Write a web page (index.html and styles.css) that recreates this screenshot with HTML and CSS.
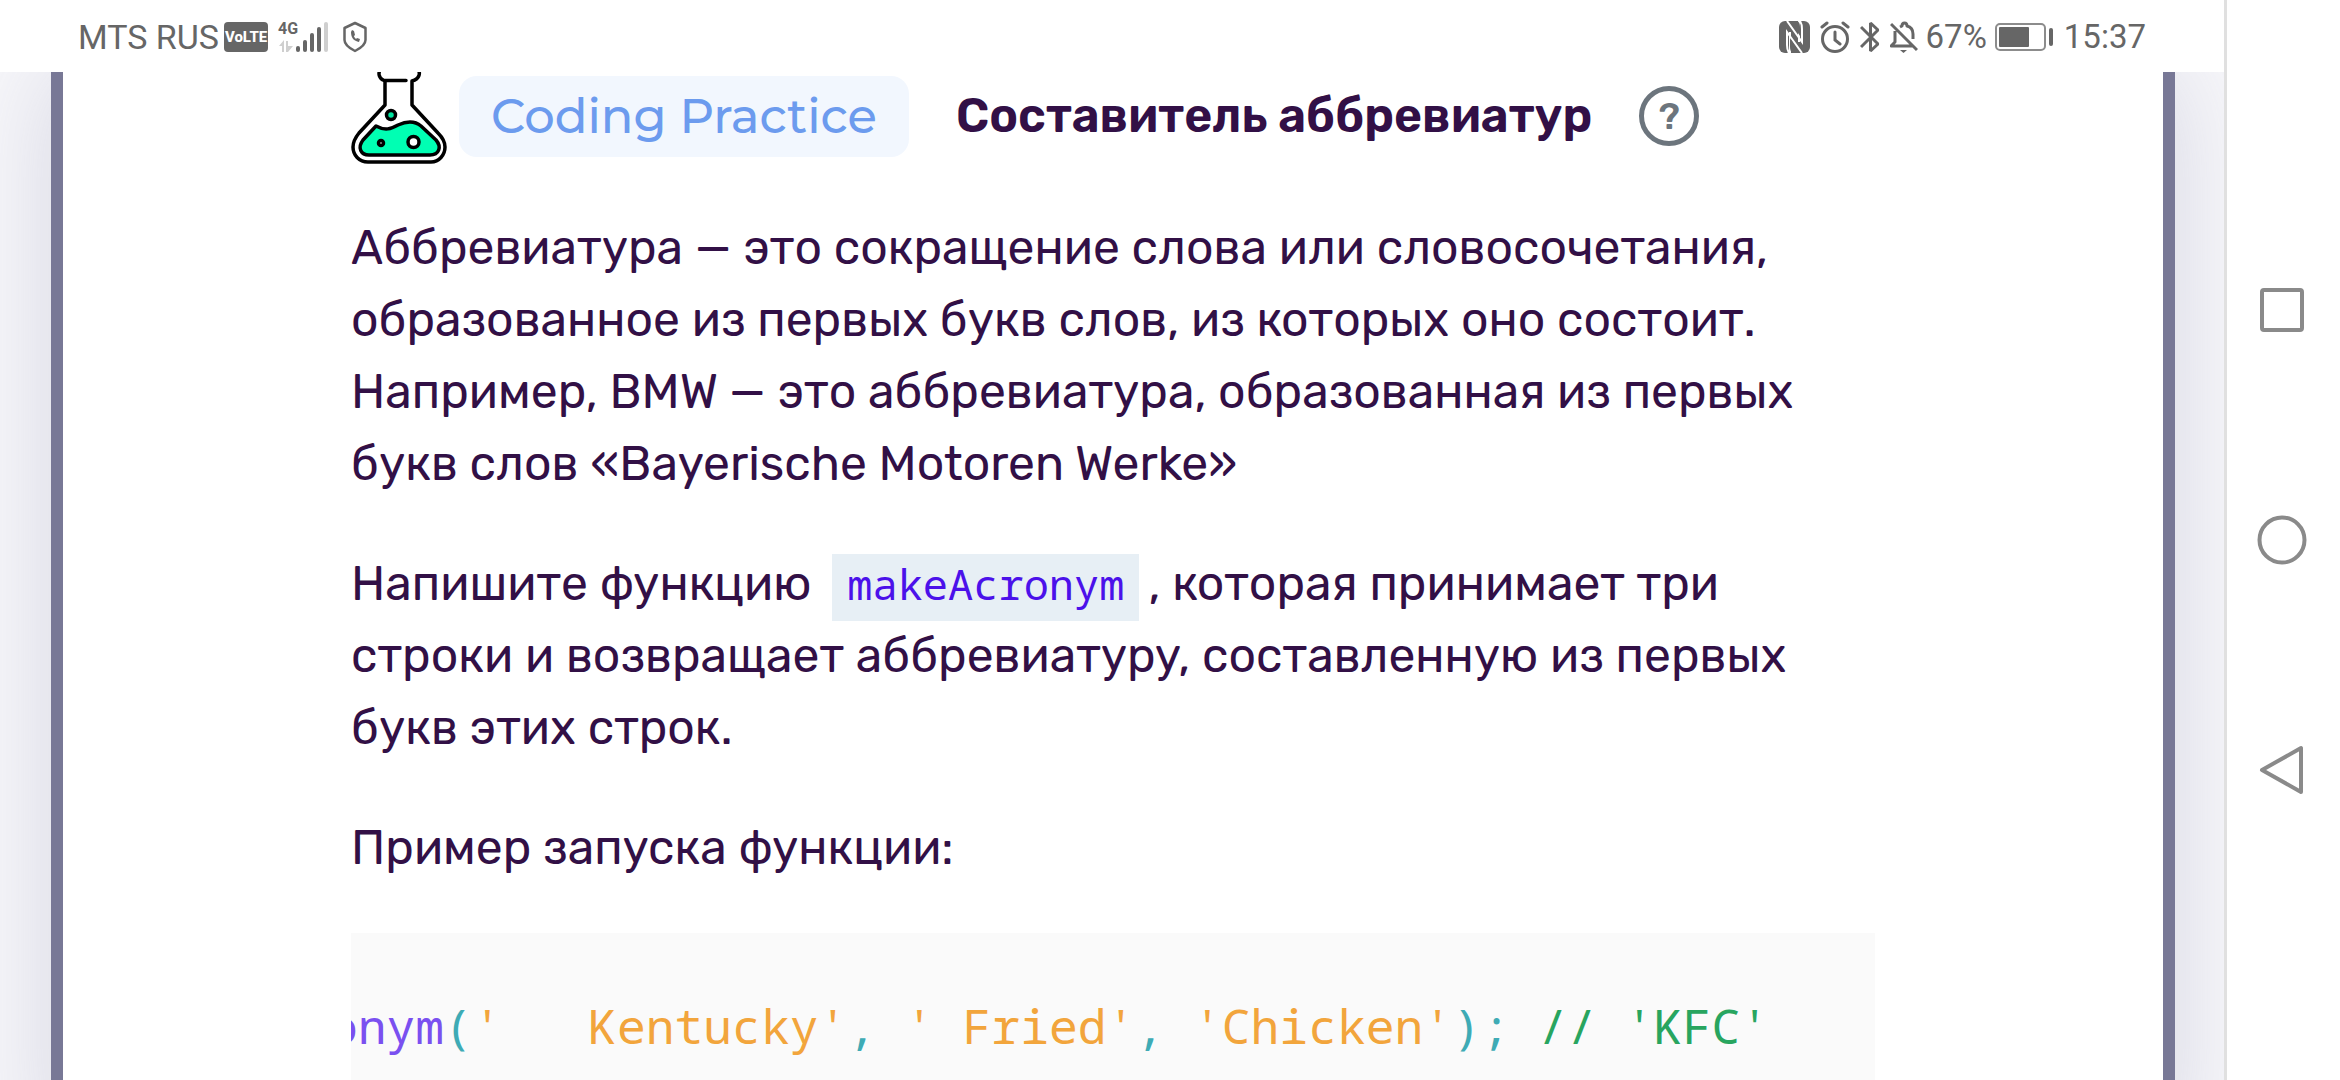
FILE: index.html
```
<!DOCTYPE html>
<html lang="ru">
<head>
<meta charset="utf-8">
<meta name="viewport" content="width=device-width, initial-scale=1">
<title>Составитель аббревиатур</title>
<link rel="stylesheet" href="styles.css">
</head>
<body>
<div class="screen">
  <header class="status">
    <div class="status-group">
      <span class="carrier">MTS RUS</span>
      <span class="volte">VoLTE</span>
      <span class="network">
        <span class="network-type">4G</span>
        <svg width="50" height="32" viewBox="0 0 50 32" aria-hidden="true">
          <g fill="#cfcfcf"><path d="M1 25l5-6v12H4v-6zM8 20h2v5h5l-5 6H8z"/><rect x="46" y="1" width="4" height="30" rx="2"/></g>
          <g fill="#666"><rect x="18" y="25" width="4" height="6" rx="2"/><rect x="25" y="19" width="4" height="12" rx="2"/><rect x="32" y="12" width="4" height="19" rx="2"/><rect x="39" y="6" width="4" height="25" rx="2"/></g>
        </svg>
      </span>
      <svg class="shield" width="24" height="32" viewBox="0 0 24 32" fill="none" stroke="#666" stroke-width="2.500" stroke-linejoin="round" aria-hidden="true">
        <path d="M12 2l10.500 5v12c0 5-4.500 8-10.500 11C6 27 1.500 24 1.500 19V7z"/>
        <path d="M8 11c0 6 3 9 8 10l1-3-3-1-1 1c-1-1-2-2-2-3l1-1-1-4-2-1z" fill="#666" stroke="none"/>
      </svg>
    </div>
    <div class="status-group right">
      <svg width="31" height="32" viewBox="0 0 31 32" aria-hidden="true">
        <rect width="31" height="32" rx="6" fill="#666"/>
        <path fill="none" stroke="#fff" stroke-width="2" d="M8 0l15 21V8q0-5-2-8M23 32L8 11v13q0 5 2 8M11 11v21M20 21V0"/>
        <path fill="#666" d="M11 0h7q3 1 3 6v9zM20 32h-6q-3-1-3-6v-9z"/>
      </svg>
      <svg width="30" height="32" viewBox="0 0 30 32" fill="none" stroke="#666" stroke-width="3" stroke-linecap="round" aria-hidden="true">
        <circle cx="15" cy="18" r="12.500"/><path d="M2 6l5-4M28 6l-5-4M15 11v8l5 4"/>
      </svg>
      <svg class="bluetooth" width="20" height="32" viewBox="0 0 20 32" fill="none" stroke="#666" stroke-width="3" stroke-linejoin="bevel" aria-hidden="true">
        <path d="M1 6l17 17-7.500 7V2l7.500 7L1 26"/>
      </svg>
      <svg width="28" height="32" viewBox="0 0 28 32" fill="none" stroke="#666" stroke-width="3" stroke-linejoin="round" aria-hidden="true">
        <path d="M5 10v11l-4 4h22M10 6l2-1c0-4 5-4 5 0 4 1 6 4 6 8v5M1 3l26 26"/><path d="M10 29h7l-3.500 3z" fill="#666" stroke="none"/>
      </svg>
      <span>67%</span>
      <svg class="battery" width="59" height="28" viewBox="0 0 59 28" aria-hidden="true">
        <rect x="1" y="1" width="49" height="26" rx="4" fill="none" stroke="#8c8c8c" stroke-width="2"/>
        <rect x="4" y="4" width="30" height="20" rx="1" fill="#666"/><rect x="54" y="5" width="4" height="18" rx="2" fill="#666"/>
      </svg>
      <time>15:37</time>
    </div>
  </header>

  <main class="viewport">
    <article class="card">
      <div class="heading">
        <svg class="flask" viewBox="0 0 96 96" fill="none" stroke="#000" stroke-width="3.500" stroke-linecap="round" stroke-linejoin="round" aria-hidden="true">
          <path d="M30 1c-3 3-3 9 3 11.500h22M66 1c4 3 3 10-5 12v24l26 28c5 5 7 10 7 14 0 8-6 15-14 15H17C8 94 2 87 2 79c0-5 2-9 6-14l26-28V13"/>
          <path fill="#00ffb3" d="M25 58c9 5 15 3 22-1 9-4 17-4 23 1l15 14c6 7 3 15-6 15H18c-8 0-12-7-6-15z"/>
          <circle cx="40" cy="47" r="4.500" fill="#00e5a0"/>
          <circle cx="30" cy="75" r="2.500" fill="#fff"/>
          <circle cx="62.500" cy="74" r="5.500" fill="#fff"/>
        </svg>
        <span class="chip">Coding Practice</span>
        <h1>Составитель аббревиатур</h1>
        <button class="help" type="button" aria-label="Помощь">?</button>
      </div>
      <p>Аббревиатура — это сокращение слова или словосочетания, образованное из первых букв слов, из которых оно состоит. Например, BMW — это аббревиатура, образованная из первых букв слов «Bayerische Motoren Werke»</p>
      <p>Напишите функцию <code class="inline">makeAcronym</code>, которая принимает три строки и возвращает аббревиатуру, составленную из первых букв этих строк.</p>
      <p>Пример запуска функции:</p>
      <pre class="block"><code><span class="fn">makeAcronym</span><span class="pt">(</span><span class="st">'   Kentucky'</span><span class="pt">,</span> <span class="st">' Fried'</span><span class="pt">,</span> <span class="st">'Chicken'</span><span class="pt">);</span> <span class="cm">// 'KFC'</span></code></pre>
    </article>
  </main>
</div>

<nav class="system-nav">
  <button type="button" aria-label="Недавние"><svg viewBox="0 0 50 50"><rect x="5" y="5" width="40" height="40" rx="2"/></svg></button>
  <button type="button" aria-label="Домой"><svg viewBox="0 0 50 50"><circle cx="25" cy="25" r="22.500"/></svg></button>
  <button type="button" aria-label="Назад"><svg viewBox="0 0 50 50"><path d="M5 25L44 3v44z"/></svg></button>
</nav>
</body>
</html>
```
FILE: styles.css
```
* {
  box-sizing: border-box;
}

body {
  margin: 0;
  height: 100vh;
  display: flex;
  overflow: hidden;
  background: #fff;
  color: #321046;
  font: 48px/72px Rubik, "Noto Sans", sans-serif;
}

button {
  padding: 0;
  background: none;
  border: 0;
}

.screen {
  flex: 1;
  min-width: 0;
  display: flex;
  flex-direction: column;
}

/* Status bar */
.status {
  flex: none;
  height: 72px;
  padding: 1px 78px 0;
  display: flex;
  justify-content: space-between;
  align-items: center;
  color: #666;
  font: 34px/40px Roboto, sans-serif;
}

.status-group {
  display: flex;
  align-items: center;
}

.status-group.right {
  gap: 10px;
  font-size: 33px;
}

.carrier {
  margin-right: 5px;
}

.volte {
  width: 44px;
  height: 30px;
  margin-right: 10px;
  border-radius: 4px;
  background: #666;
  color: #fff;
  font: 800 15px/30px Roboto, sans-serif;
  text-align: center;
}

.network {
  display: grid;
  margin-right: 15px;
}

.network > * {
  grid-area: 1 / 1;
}

.network-type {
  font: 700 16px/16px Roboto, sans-serif;
}

.right span {
  margin: 0 -2px;
}

/* Lesson card */
.viewport {
  flex: 1;
  min-height: 0;
  overflow: hidden;
  padding: 0 49px 0 51px;
  background: #f7f7fa;
}

.card {
  min-height: 100%;
  padding: 0 288px;
  background: #fff;
  border: solid #787896;
  border-width: 0 12px;
  box-shadow: 0 0 96px #7878a040;
}

.heading {
  display: flex;
  align-items: center;
  height: 96px;
  margin: -4px 0 48px;
}

.flask {
  width: 96px;
  height: 96px;
  margin-right: 12px;
}

.chip {
  padding: 4px 32px 5px;
  border-radius: 18px;
  background: #f2f7fe;
  color: #6c9bee;
  font-family: Montserrat, Rubik, sans-serif;
  font-weight: 500;
}

h1 {
  margin: 0 47px;
  font-size: 48px;
  font-weight: 600;
}

.help {
  width: 60px;
  height: 60px;
  border: 5px solid #6c757d;
  border-radius: 50%;
  color: #6c757d;
  font: 500 38px/50px Rubik, sans-serif;
}

p {
  margin: 0 0 48px;
}

code {
  font-family: "Noto Sans Mono", "DejaVu Sans Mono", monospace;
}

.inline {
  margin: 0 9px;
  padding: 1px 15px 9px;
  background: #e7eff5;
  color: #4b11ea;
  font-size: 42px;
  line-height: 48px;
}

.block {
  display: flex;
  justify-content: flex-end;
  margin: 49px 0 0;
  padding: 57px 106px 96px 48px;
  overflow: hidden;
  background: #fafafa;
}

.fn { color: #7a50f0; }
.pt { color: #3eabb5; }
.st { color: #f2a53c; }
.cm { color: #28a55f; }

/* System navigation */
.system-nav {
  flex: none;
  width: 116px;
  padding-right: 4px;
  display: flex;
  flex-direction: column;
  justify-content: center;
  align-items: center;
  gap: 180px;
  border-left: 3px solid #e0e0e0;
}

.system-nav button {
  width: 50px;
  height: 50px;
}

.system-nav svg {
  display: block;
  fill: none;
  stroke: #8a8a8a;
  stroke-width: 4;
  stroke-linejoin: round;
}
```
